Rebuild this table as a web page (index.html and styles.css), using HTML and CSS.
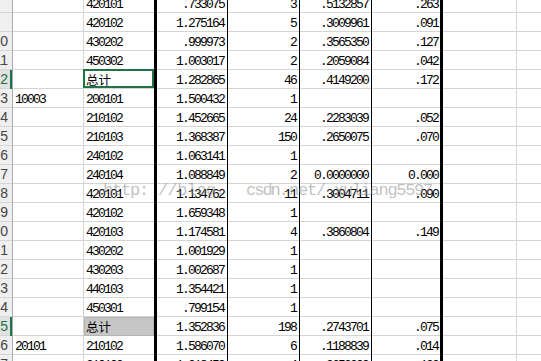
FILE: index.html
```html
<!DOCTYPE html>
<html>
<head>
<meta charset="utf-8">
<link rel="stylesheet" href="styles.css">
</head>
<body>
<div class="sheet">
  <div class="row"><div class="hd"></div><div class="c a"></div><div class="c b">420101</div><div class="c n cc">.733075</div><div class="c n cd">3</div><div class="c n ce">.5132857</div><div class="c n cf">.263</div><div class="c g"></div><div class="c h"></div></div>
  <div class="row"><div class="hd"></div><div class="c a"></div><div class="c b">420102</div><div class="c n cc">1.275164</div><div class="c n cd">5</div><div class="c n ce">.3009961</div><div class="c n cf">.091</div><div class="c g"></div><div class="c h"></div></div>
  <div class="row"><div class="hd"><span>10</span></div><div class="c a"></div><div class="c b">430202</div><div class="c n cc">.999973</div><div class="c n cd">2</div><div class="c n ce">.3565350</div><div class="c n cf">.127</div><div class="c g"></div><div class="c h"></div></div>
  <div class="row"><div class="hd"><span>11</span></div><div class="c a"></div><div class="c b">450302</div><div class="c n cc">1.003017</div><div class="c n cd">2</div><div class="c n ce">.2059084</div><div class="c n cf">.042</div><div class="c g"></div><div class="c h"></div></div>
  <div class="row"><div class="hd sel"><span>12</span></div><div class="c a"></div><div class="c b zh active">总计</div><div class="c n cc">1.282865</div><div class="c n cd">46</div><div class="c n ce">.4149200</div><div class="c n cf">.172</div><div class="c g"></div><div class="c h"></div></div>
  <div class="row"><div class="hd"><span>13</span></div><div class="c a">10003</div><div class="c b">200101</div><div class="c n cc">1.500432</div><div class="c n cd">1</div><div class="c n ce"></div><div class="c n cf"></div><div class="c g"></div><div class="c h"></div></div>
  <div class="row"><div class="hd"><span>14</span></div><div class="c a"></div><div class="c b">210102</div><div class="c n cc">1.452665</div><div class="c n cd">24</div><div class="c n ce">.2283039</div><div class="c n cf">.052</div><div class="c g"></div><div class="c h"></div></div>
  <div class="row"><div class="hd"><span>15</span></div><div class="c a"></div><div class="c b">210103</div><div class="c n cc">1.368387</div><div class="c n cd">150</div><div class="c n ce">.2650075</div><div class="c n cf">.070</div><div class="c g"></div><div class="c h"></div></div>
  <div class="row"><div class="hd"><span>16</span></div><div class="c a"></div><div class="c b">240102</div><div class="c n cc">1.063141</div><div class="c n cd">1</div><div class="c n ce"></div><div class="c n cf"></div><div class="c g"></div><div class="c h"></div></div>
  <div class="row"><div class="hd"><span>17</span></div><div class="c a"></div><div class="c b">240104</div><div class="c n cc">1.088849</div><div class="c n cd">2</div><div class="c n ce">0.0000000</div><div class="c n cf">0.000</div><div class="c g"></div><div class="c h"></div></div>
  <div class="row"><div class="hd"><span>18</span></div><div class="c a"></div><div class="c b">420101</div><div class="c n cc">1.134762</div><div class="c n cd">11</div><div class="c n ce">.3004711</div><div class="c n cf">.090</div><div class="c g"></div><div class="c h"></div></div>
  <div class="row"><div class="hd"><span>19</span></div><div class="c a"></div><div class="c b">420102</div><div class="c n cc">1.659348</div><div class="c n cd">1</div><div class="c n ce"></div><div class="c n cf"></div><div class="c g"></div><div class="c h"></div></div>
  <div class="row"><div class="hd"><span>20</span></div><div class="c a"></div><div class="c b">420103</div><div class="c n cc">1.174581</div><div class="c n cd">4</div><div class="c n ce">.3860804</div><div class="c n cf">.149</div><div class="c g"></div><div class="c h"></div></div>
  <div class="row"><div class="hd"><span>21</span></div><div class="c a"></div><div class="c b">430202</div><div class="c n cc">1.001929</div><div class="c n cd">1</div><div class="c n ce"></div><div class="c n cf"></div><div class="c g"></div><div class="c h"></div></div>
  <div class="row"><div class="hd"><span>22</span></div><div class="c a"></div><div class="c b">430203</div><div class="c n cc">1.002687</div><div class="c n cd">1</div><div class="c n ce"></div><div class="c n cf"></div><div class="c g"></div><div class="c h"></div></div>
  <div class="row"><div class="hd"><span>23</span></div><div class="c a"></div><div class="c b">440103</div><div class="c n cc">1.354421</div><div class="c n cd">1</div><div class="c n ce"></div><div class="c n cf"></div><div class="c g"></div><div class="c h"></div></div>
  <div class="row"><div class="hd"><span>24</span></div><div class="c a"></div><div class="c b">450301</div><div class="c n cc">.799154</div><div class="c n cd">1</div><div class="c n ce"></div><div class="c n cf"></div><div class="c g"></div><div class="c h"></div></div>
  <div class="row"><div class="hd sel"><span>25</span></div><div class="c a"></div><div class="c b zh grey">总计</div><div class="c n cc">1.352836</div><div class="c n cd">198</div><div class="c n ce">.2743701</div><div class="c n cf">.075</div><div class="c g"></div><div class="c h"></div></div>
  <div class="row"><div class="hd"><span>26</span></div><div class="c a">20101</div><div class="c b">210102</div><div class="c n cc">1.586070</div><div class="c n cd">6</div><div class="c n ce">.1188839</div><div class="c n cf">.014</div><div class="c g"></div><div class="c h"></div></div>
  <div class="row"><div class="hd"><span>27</span></div><div class="c a"></div><div class="c b">210103</div><div class="c n cc">1.318459</div><div class="c n cd">4</div><div class="c n ce">.3653209</div><div class="c n cf">.133</div><div class="c g"></div><div class="c h"></div></div>
  <div class="watermark"><span class="w1">http:</span><span class="w2">//blog.</span><span class="w3">csdn.</span><span class="w4">net/</span><span class="w5">xuliang5597</span></div>
</div>
</body>
</html>
```
FILE: styles.css
```css
html, body {
  margin: 0;
  padding: 0;
  background: #ffffff;
  overflow: hidden;
}
.sheet {
  position: relative;
  margin-top: -6px;
  width: 541px;
}
.row {
  display: flex;
  height: 19px;
}
.hd {
  width: 12px;
  height: 19px;
  flex: none;
  box-sizing: content-box;
  border-right: 1px solid #ababab;
  background: #efefef linear-gradient(to top, #d5d5d5 1px, transparent 1px);
  overflow: hidden;
  display: flex;
  justify-content: flex-end;
  font-family: "Liberation Sans", Arial, sans-serif;
  font-size: 14px;
  line-height: 19px;
  color: #444444;
}
.hd span {
  flex: none;
  white-space: nowrap;
  margin-right: 4px;
}
.hd.sel {
  color: #217346;
  background: #e1e1e1 linear-gradient(to top, #d5d5d5 1px, transparent 1px);
  box-shadow: inset -2px 0 0 #217346;
}
.c {
  flex: none;
  height: 19px;
  box-sizing: border-box;
  background: linear-gradient(to top, #d4d4d4 1px, transparent 1px);
  font-family: "Liberation Mono", "Noto Sans CJK SC", monospace;
  font-size: 13px;
  letter-spacing: -1.8px;
  line-height: 17px;
  padding-top: 2px;
  white-space: nowrap;
  color: #000000;
  position: relative;
}
.zh {
  font-family: "Noto Sans CJK SC", sans-serif;
  font-size: 12.5px;
  letter-spacing: 0;
  line-height: 18px;
  padding-top: 1px;
}
.a {
  width: 71px;
  border-right: 1px solid #d4d4d4;
  padding-left: 2px;
}
.b {
  width: 73px;
  border-right: 3px solid #000000;
  padding-left: 2px;
}
.b.active::after {
  content: "";
  position: absolute;
  left: -1px;
  top: -1px;
  width: 71px;
  height: 19px;
  box-sizing: border-box;
  border: 2px solid #217346;
}
.b.grey {
  background: #c6c6c6;
  box-shadow: inset 0 0 0 1px #b4b4b4;
}
.n { text-align: right; }
.cc {
  width: 71px;
  border-right: 1px solid #000000;
  padding-right: 3px;
}
.cd {
  width: 72px;
  border-right: 1px solid #000000;
  padding-right: 3px;
}
.ce {
  width: 72px;
  border-right: 1px solid #000000;
  padding-right: 3px;
}
.cf {
  width: 71px;
  border-right: 3px solid #000000;
  padding-right: 2px;
}
.g {
  width: 74px;
  border-right: 1px solid #d4d4d4;
}
.h {
  flex: 1;
}
.watermark {
  position: absolute;
  left: 0;
  top: 185px;
  width: 541px;
  height: 24px;
  font-family: "Liberation Mono", "DejaVu Sans Mono", monospace;
  font-size: 17px;
  line-height: 24px;
  color: rgba(130, 130, 130, 0.5);
  white-space: nowrap;
  pointer-events: none;
}
.watermark span {
  position: absolute;
  top: 0;
}
.w1 { left: 103px; letter-spacing: -1.2px; }
.w2 { left: 158px; letter-spacing: -0.6px; }
.w3 { left: 246px; letter-spacing: -2px; }
.w4 { left: 289px; letter-spacing: -1.2px; }
.w5 { left: 334px; letter-spacing: -1.3px; }
```
